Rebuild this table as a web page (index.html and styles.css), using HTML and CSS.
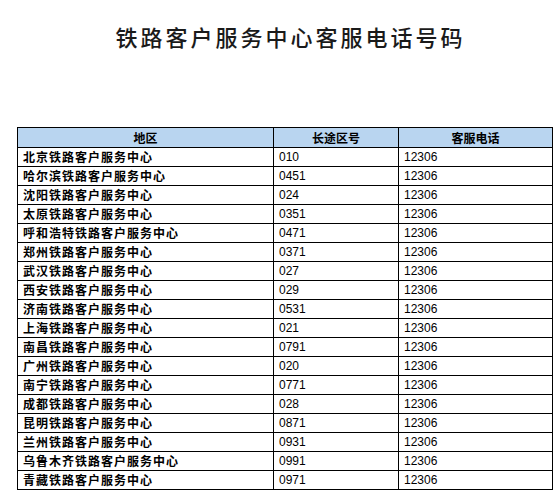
FILE: index.html
```html
<!DOCTYPE html>
<html lang="zh">
<head>
<meta charset="utf-8">
<link rel="stylesheet" href="styles.css">
</head>
<body>
<h1 class="title">铁路客户服务中心客服电话号码</h1>
<table class="phones">
<colgroup><col class="c1"><col class="c2"><col class="c3"></colgroup>
<thead>
<tr><th>地区</th><th>长途区号</th><th>客服电话</th></tr>
</thead>
<tbody>
<tr><td class="zh">北京铁路客户服务中心</td><td>010</td><td>12306</td></tr>
<tr><td class="zh">哈尔滨铁路客户服务中心</td><td>0451</td><td>12306</td></tr>
<tr><td class="zh">沈阳铁路客户服务中心</td><td>024</td><td>12306</td></tr>
<tr><td class="zh">太原铁路客户服务中心</td><td>0351</td><td>12306</td></tr>
<tr><td class="zh">呼和浩特铁路客户服务中心</td><td>0471</td><td>12306</td></tr>
<tr><td class="zh">郑州铁路客户服务中心</td><td>0371</td><td>12306</td></tr>
<tr><td class="zh">武汉铁路客户服务中心</td><td>027</td><td>12306</td></tr>
<tr><td class="zh">西安铁路客户服务中心</td><td>029</td><td>12306</td></tr>
<tr><td class="zh">济南铁路客户服务中心</td><td>0531</td><td>12306</td></tr>
<tr><td class="zh">上海铁路客户服务中心</td><td>021</td><td>12306</td></tr>
<tr><td class="zh">南昌铁路客户服务中心</td><td>0791</td><td>12306</td></tr>
<tr><td class="zh">广州铁路客户服务中心</td><td>020</td><td>12306</td></tr>
<tr><td class="zh">南宁铁路客户服务中心</td><td>0771</td><td>12306</td></tr>
<tr><td class="zh">成都铁路客户服务中心</td><td>028</td><td>12306</td></tr>
<tr><td class="zh">昆明铁路客户服务中心</td><td>0871</td><td>12306</td></tr>
<tr><td class="zh">兰州铁路客户服务中心</td><td>0931</td><td>12306</td></tr>
<tr><td class="zh">乌鲁木齐铁路客户服务中心</td><td>0991</td><td>12306</td></tr>
<tr><td class="zh">青藏铁路客户服务中心</td><td>0971</td><td>12306</td></tr>
</tbody>
</table>
</body>
</html>
```
FILE: styles.css
```css
html, body {
  margin: 0;
  padding: 0;
  background: #fff;
}
body {
  width: 560px;
  height: 501px;
  overflow: hidden;
  font-family: "Liberation Sans", "Noto Sans CJK SC", sans-serif;
}
.title {
  margin: 0;
  padding: 23px 0 0 21px;
  height: 127px;
  box-sizing: border-box;
  text-align: center;
  font-family: "Noto Sans CJK SC", serif;
  font-weight: 500;
  font-size: 22px;
  line-height: 26px;
  letter-spacing: 3px;
  color: #1a1a1a;
}
.phones {
  margin-left: 17px;
  width: 535px;
  border-collapse: collapse;
  table-layout: fixed;
  font-size: 12px;
  color: #000;
}
.c1 { width: 256px; }
.c2 { width: 125px; }
.c3 { width: 154px; }
.phones th,
.phones td {
  border: 1px solid #000;
  height: 18px;
  padding: 0 0 0 5px;
  line-height: 18px;
  white-space: nowrap;
  overflow: hidden;
}
.phones th {
  height: 19px;
  background: #b9d5f0;
  text-align: center;
  padding: 0;
  font-family: "Noto Sans CJK SC", sans-serif;
  font-weight: bold;
}
.phones td.zh {
  font-family: "Noto Sans CJK SC", sans-serif;
  font-weight: bold;
  letter-spacing: 1px;
}
```
